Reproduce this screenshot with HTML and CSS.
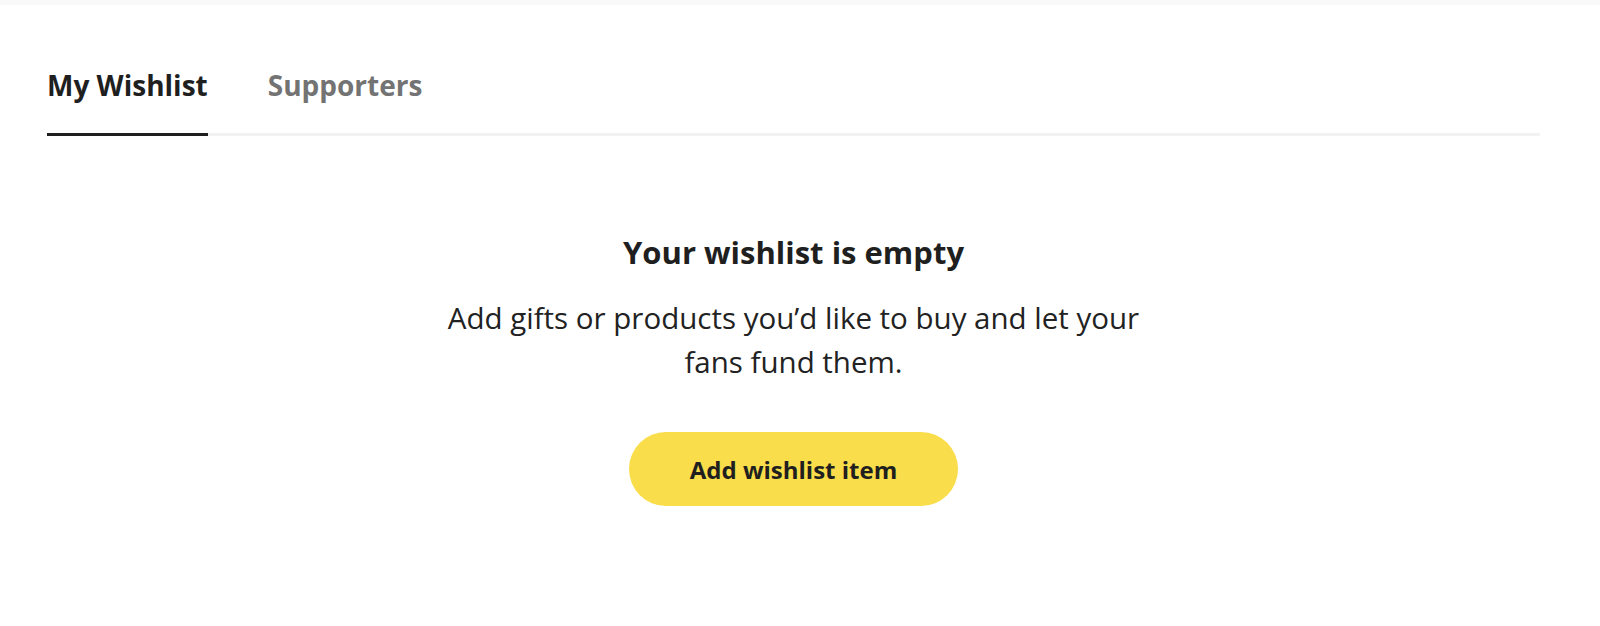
FILE: index.html
```html
<!DOCTYPE html>
<html lang="en">
<head>
<meta charset="utf-8">
<title>My Wishlist</title>
<link rel="stylesheet" href="styles.css">
</head>
<body>
<div class="topbar"></div>
<main class="page">
  <nav class="tabs">
    <a class="tab active" href="#">My Wishlist</a>
    <a class="tab" href="#">Supporters</a>
  </nav>
  <section class="empty">
    <h2 class="empty-title">Your wishlist is empty</h2>
    <p class="empty-text">Add gifts or products you’d like to buy and let your fans fund them.</p>
    <button class="btn" type="button">Add wishlist item</button>
  </section>
</main>
</body>
</html>
```

FILE: styles.css
```css
* { box-sizing: border-box; }
html, body { margin: 0; padding: 0; background: #fff; }
body {
  font-family: "Open Sans", "Noto Sans", sans-serif;
  color: #222;
  width: 1600px;
  height: 626px;
  overflow: hidden;
}
.topbar { height: 5px; background: #f9f9f9; }
.page { padding: 0 60px 0 47px; }
.tabs {
  display: flex;
  gap: 60px;
  margin-top: 62px;
  border-bottom: 3px solid #f2f2f2;
}
.tab {
  display: block;
  font-size: 28px;
  font-weight: 700;
  line-height: 36px;
  padding-bottom: 30px;
  margin-bottom: -3px;
  text-decoration: none;
  color: #737373;
  border-bottom: 3px solid transparent;
}
.tab.active { color: #1f1f1f; border-bottom-color: #1f1f1f; }
.empty {
  display: flex;
  flex-direction: column;
  align-items: center;
  text-align: center;
  padding-top: 97px;
}
.empty-title {
  margin: 0;
  font-size: 31px;
  font-weight: 700;
  line-height: 38px;
  color: #1f1f1f;
}
.empty-text {
  margin: 25px 0 0;
  width: 705px;
  font-size: 29.5px;
  line-height: 44px;
  color: #222;
}
.btn {
  margin-top: 48px;
  width: 329px;
  height: 74px;
  border: 0;
  border-radius: 37px;
  background: #f9dd4a;
  font-family: inherit;
  font-size: 24px;
  font-weight: 700;
  color: #1f1f1f;
  cursor: pointer;
}
```
